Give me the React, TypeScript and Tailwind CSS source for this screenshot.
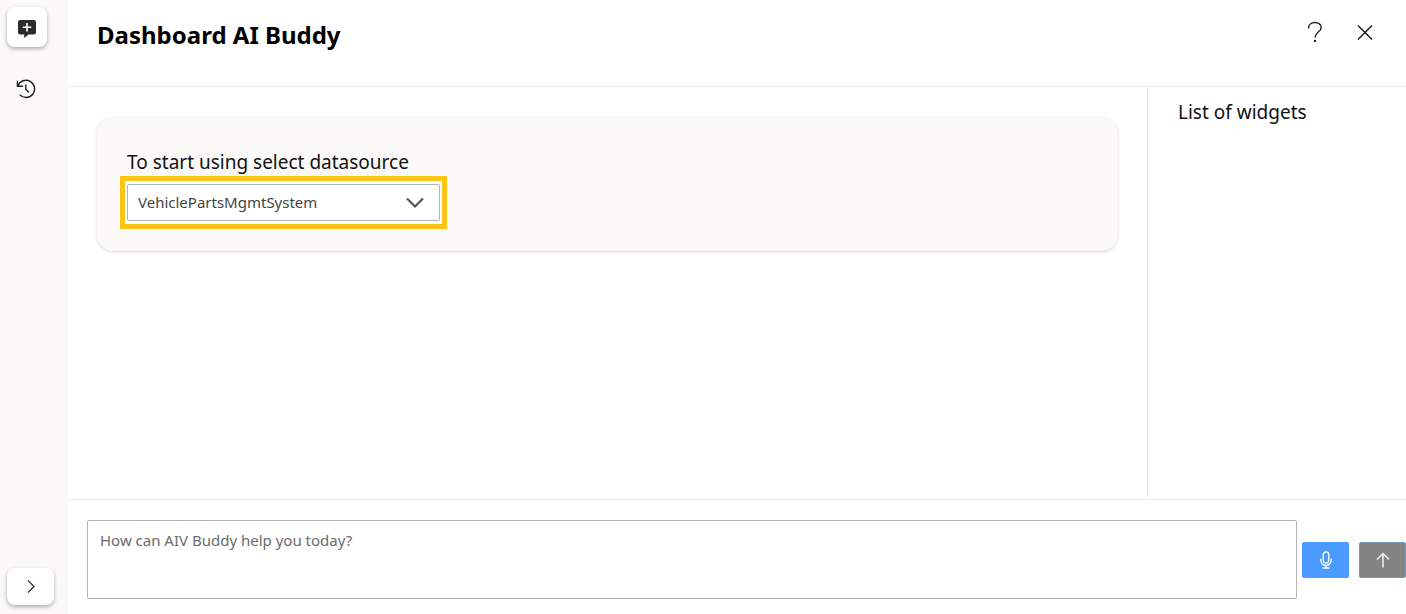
import React, { useState } from 'react';

const datasources: string[] = ['VehiclePartsMgmtSystem'];

const NewChatIcon = () => (
  <svg width="20" height="24" viewBox="0 0 20 24" aria-hidden="true">
    <path
      d="M3.200 5h13.600A2.200 2.200 0 0 1 19 7.200v10.100a2.200 2.200 0 0 1-2.200 2.200H11.500L7.200 23v-3.500h-4A2.200 2.200 0 0 1 1 17.300V7.200A2.200 2.200 0 0 1 3.200 5z"
      fill="#2b2b2b"
    />
    <path d="M10 8v8.500M5.700 12.250h8.600" stroke="#fff" strokeWidth="1.600" />
  </svg>
);

const HistoryIcon = () => (
  <svg width="20" height="20" viewBox="0 0 20 20" fill="none" stroke="#1f1f1f" strokeWidth="1.400" aria-hidden="true">
    <path d="M1.900 6.900A8.600 8.600 0 1 1 3.600 15.600" />
    <path d="M1.400 1.700v5.500h5.600" />
    <path d="M9.800 5.500v4.700l3.200 3.200" />
  </svg>
);

const HelpIcon = () => (
  <svg width="16" height="22" viewBox="0 0 16 22" fill="none" stroke="#1f1f1f" strokeWidth="1.400" aria-hidden="true">
    <path d="M1.600 7.600V6.800C1.600 3.600 4.300 1.500 7.900 1.500s6.300 2 6.300 5c0 2.400-1.500 3.500-3.100 4.700C9.300 12.600 8 13.600 8 16.400" />
    <circle cx="8" cy="19.900" r="1.200" fill="#1f1f1f" stroke="none" />
  </svg>
);

const CloseIcon = () => (
  <svg width="16" height="16" viewBox="0 0 16 16" fill="none" stroke="#1f1f1f" strokeWidth="1.500" aria-hidden="true">
    <path d="M1 1.500l14 14M15 1.500L1 15.500" />
  </svg>
);

const MicIcon = () => (
  <svg width="12" height="18" viewBox="0 0 12 18" fill="none" stroke="#fff" strokeWidth="1.300" aria-hidden="true">
    <rect x="3.200" y="1" width="5.600" height="11" rx="2.800" />
    <path d="M0.800 7.500v1.800a5.200 5.200 0 0 0 10.400 0V7.500M6 14.500V17M2.500 17h7" />
  </svg>
);

const Sidebar: React.FC = () => (
  <nav className="flex w-[68px] shrink-0 flex-col items-start bg-[#faf9f8] px-[7px] pt-[7px] pb-[9px]">
    <button aria-label="New chat" className="flex h-10 w-10 items-center justify-center rounded-lg bg-white shadow-[0_2px_4px_rgba(0,0,0,0.3)]">
      <NewChatIcon />
    </button>
    <button aria-label="History" className="mt-[22px] flex h-10 w-[38px] items-center justify-center">
      <HistoryIcon />
    </button>
    <button aria-label="Expand" className="mt-auto flex h-[37px] w-[47px] items-center justify-center rounded-lg bg-white shadow-[0_2px_4px_rgba(0,0,0,0.3)]">
      <svg width="8" height="14" viewBox="0 0 8 14" fill="none" stroke="#333" strokeWidth="1.300" aria-hidden="true">
        <path d="M1 0.500l6 6-6 6" />
      </svg>
    </button>
  </nav>
);

const DatasourceCard: React.FC = () => {
  const [datasource, setDatasource] = useState(datasources[0]);

  return (
    <section className="rounded-2xl bg-[#faf9f8] px-[30px] pt-[30px] pb-[29px] shadow-[0_1px_3px_rgba(0,0,0,0.16)]">
      <label htmlFor="datasource" className="mb-[6px] block text-[19px] leading-[30px] text-[#111]">
        To start using select datasource
      </label>
      {/* Highlighted drop-down */}
      <div className="relative w-[313px] max-w-full bg-white py-px outline-5 outline-offset-2 outline-[#fdc513] ring-2 ring-white">
        <select
          id="datasource"
          value={datasource}
          onChange={(e) => setDatasource(e.target.value)}
          className="block h-[37px] w-full appearance-none rounded-xs border border-[#b3b3b3] bg-white pr-10 pl-[10px] text-[15px] text-[#444]"
        >
          {datasources.map((name) => (
            <option key={name}>{name}</option>
          ))}
        </select>
        <svg
          className="pointer-events-none absolute top-[14px] right-4"
          width="18"
          height="12"
          viewBox="0 0 18 12"
          fill="none"
          stroke="#555"
          strokeWidth="2.200"
          aria-hidden="true"
        >
          <path d="M1 1.500l8 8 8-8" />
        </svg>
      </div>
    </section>
  );
};

const PromptBar: React.FC = () => {
  const [prompt, setPrompt] = useState('');

  return (
    <footer className="flex items-center border-t border-[#ebebeb] pt-5 pb-[15px] pl-[19px]">
      <textarea
        aria-label="Message"
        value={prompt}
        onChange={(e) => setPrompt(e.target.value)}
        placeholder="How can AIV Buddy help you today?"
        className="h-[79px] min-w-0 flex-1 resize-none rounded-xs border border-[#b3b3b3] px-3 py-[7px] text-[15px] leading-6 placeholder:text-[#6b6b6b]"
      />
      <button aria-label="Speak" className="ml-[5px] flex h-9 w-[47px] items-center justify-center rounded-xs bg-[#4a9aff]">
        <MicIcon />
      </button>
      <button aria-label="Send" className="ml-[10px] flex h-9 w-[47px] items-center justify-center rounded-xs border border-[#6a9cc0] bg-[#838383]">
        <svg width="14" height="16" viewBox="0 0 14 16" fill="none" stroke="#f0f0f0" strokeWidth="1.500" aria-hidden="true">
          <path d="M7 15.500V1.500M1 7.500l6-6 6 6" />
        </svg>
      </button>
    </footer>
  );
};

const App: React.FC = () => {
  return (
    <div className="flex min-h-screen bg-white font-['Segoe_UI','Noto_Sans',sans-serif] text-black">
      <Sidebar />
      <div className="flex min-w-0 flex-1 flex-col">
        <header className="flex h-[87px] items-start justify-between border-b border-[#ebebeb] pt-5 pr-[33px] pl-[29px]">
          <h1 className="text-2xl leading-[30px] font-bold">Dashboard AI Buddy</h1>
          <div className="flex h-6 items-center gap-[34px]">
            <button aria-label="Help">
              <HelpIcon />
            </button>
            <button aria-label="Close">
              <CloseIcon />
            </button>
          </div>
        </header>
        <div className="flex flex-1 py-px">
          <main className="min-w-0 flex-1 px-[29px] pt-[29px]">
            <DatasourceCard />
          </main>
          <aside className="w-[259px] shrink-0 border-l border-[#ebebeb] px-[30px] pt-[9px]">
            <h2 className="text-[19px] leading-[30px] text-[#111]">List of widgets</h2>
          </aside>
        </div>
        <PromptBar />
      </div>
    </div>
  );
};

export default App;
